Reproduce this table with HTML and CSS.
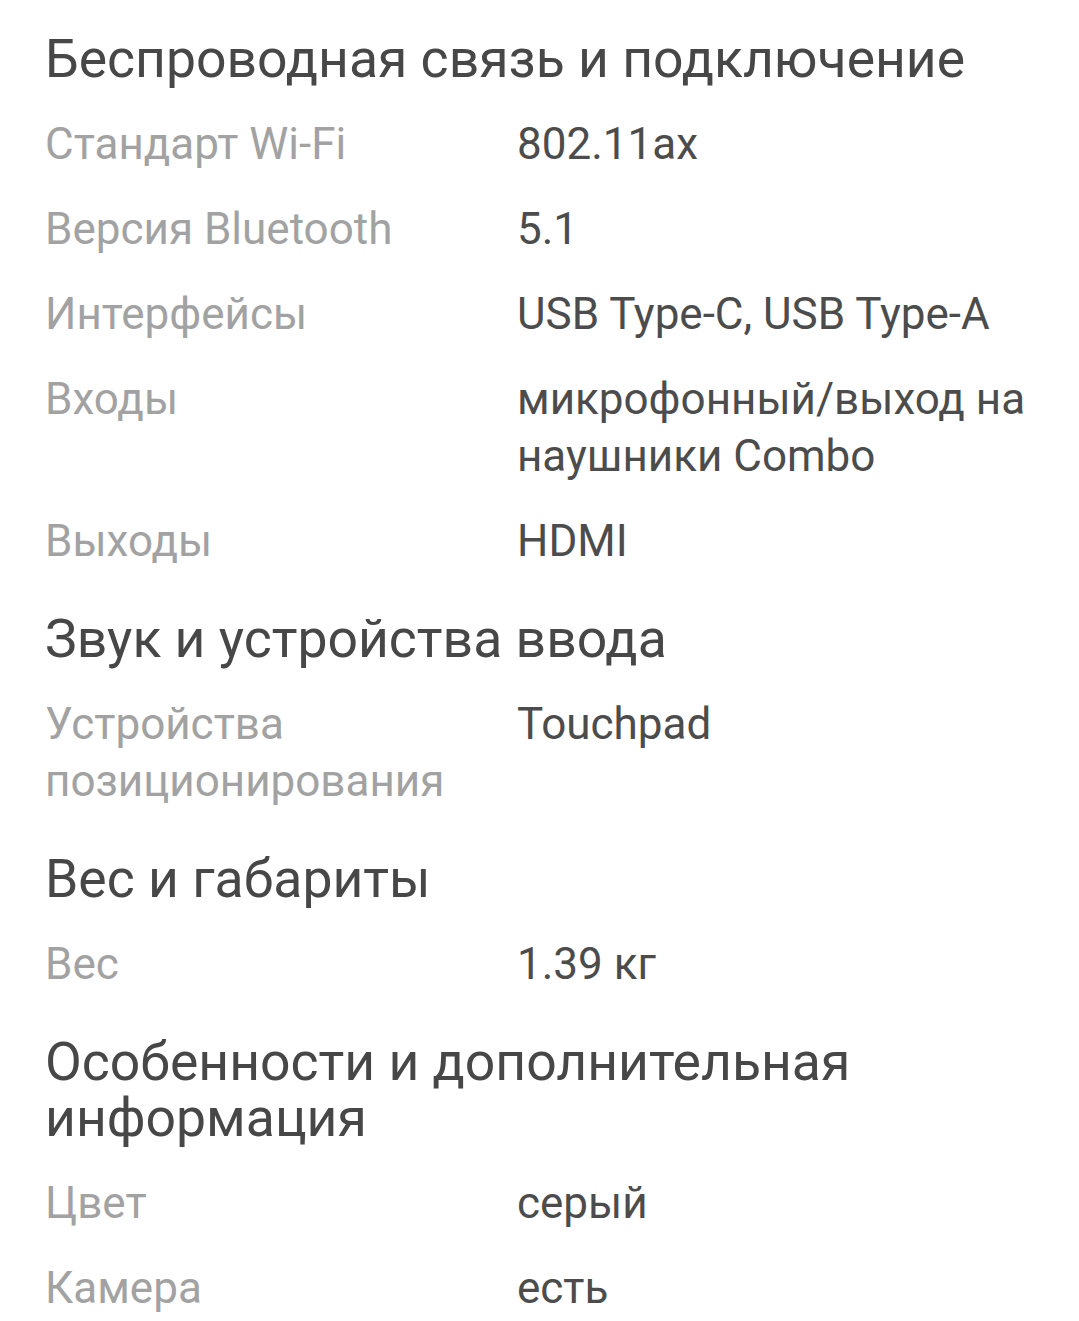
FILE: index.html
```html
<!DOCTYPE html>
<html lang="ru">
<head>
<meta charset="utf-8">
<link rel="stylesheet" href="styles.css">
</head>
<body>
<main class="specs">
  <section class="group">
    <h2 class="group-title">Беспроводная связь и подключение</h2>
    <div class="row"><div class="label">Стандарт Wi-Fi</div><div class="value">802.11ax</div></div>
    <div class="row"><div class="label">Версия Bluetooth</div><div class="value">5.1</div></div>
    <div class="row"><div class="label">Интерфейсы</div><div class="value">USB Type-C, USB Type-A</div></div>
    <div class="row"><div class="label">Входы</div><div class="value">микрофонный/выход на наушники Combo</div></div>
    <div class="row"><div class="label">Выходы</div><div class="value">HDMI</div></div>
  </section>
  <section class="group">
    <h2 class="group-title">Звук и устройства ввода</h2>
    <div class="row"><div class="label">Устройства позиционирования</div><div class="value">Touchpad</div></div>
  </section>
  <section class="group">
    <h2 class="group-title">Вес и габариты</h2>
    <div class="row"><div class="label">Вес</div><div class="value">1.39 кг</div></div>
  </section>
  <section class="group">
    <h2 class="group-title">Особенности и дополнительная информация</h2>
    <div class="row"><div class="label">Цвет</div><div class="value">серый</div></div>
    <div class="row"><div class="label">Камера</div><div class="value">есть</div></div>
  </section>
</main>
</body>
</html>
```

FILE: styles.css
```css
html, body {
  margin: 0;
  padding: 0;
  background: #ffffff;
}
body {
  font-family: Roboto, "Noto Sans", "Liberation Sans", sans-serif;
}
.specs {
  padding: 4px 30px 0 45px;
}
.group-title {
  margin: 27px 0 15px;
  font-size: 53.5px;
  line-height: 56px;
  font-weight: 400;
  color: #474747;
}
.row {
  display: grid;
  grid-template-columns: 472px 1fr;
  padding: 14px 0;
  font-size: 44px;
  line-height: 57px;
}
.label {
  color: #a2a2a2;
  padding-right: 20px;
}
.value {
  color: #4c4c4c;
}
```
